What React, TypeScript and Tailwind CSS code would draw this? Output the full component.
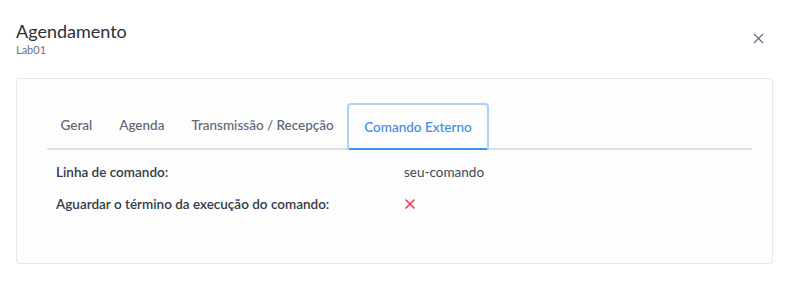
import { X } from 'lucide-react';

const tabs = ['Geral', 'Agenda', 'Transmissão / Recepção', 'Comando Externo'];

export default function App() {
  const active = 'Comando Externo';

  return (
    <div className="w-[789px] h-[292px] bg-white font-['Lato',sans-serif] text-[#2f3640]">
      <div className="flex items-start justify-between pl-4 pr-[22px] pt-[19px]">
        <div>
          <h1 className="text-[18px] leading-[24px] text-[#2b2f36]">Agendamento</h1>
          <p className="text-[11px] leading-[14px] text-[#6b7280]">Lab01</p>
        </div>
        <button className="mt-[11px] text-[#5f6b7a]">
          <X className="w-[17px] h-[17px]" strokeWidth={1.5} />
        </button>
      </div>

      <div className="mx-4 mt-[21px] h-[186px] rounded-[3px] border border-[#e7e8ea] bg-[#fdfdfd] pl-[30px] pr-[20px] pt-[24px]">
        <div className="flex border-b-2 border-[#dde1e6]">
          {tabs.map((t) =>
            t === active ? (
              <div
                key={t}
                className="-mb-[2px] flex h-[47px] items-center rounded-t-[4px] border-2 border-b-0 border-[#a9d3fa] px-[15px] text-[13.5px] font-medium text-[#3b8ee3] shadow-[inset_0_-2px_0_#3b95e8]"
              >
                {t}
              </div>
            ) : (
              <div
                key={t}
                className="flex h-[45px] items-center px-[13.5px] text-[13.5px] font-medium text-[#5b6573]"
              >
                {t}
              </div>
            )
          )}
        </div>

        <div className="pl-[9px] pt-[10px] text-[13.5px]">
          <div className="flex h-[24px] items-center">
            <span className="w-[348px] shrink-0 font-semibold text-[#333b47]">Linha de comando:</span>
            <span className="text-[#404955]">seu-comando</span>
          </div>
          <div className="mt-[8px] flex h-[24px] items-center">
            <span className="w-[348px] shrink-0 font-semibold text-[#333b47]">
              Aguardar o término da execução do comando:
            </span>
            <X className="w-[16px] h-[16px] -ml-[2px] text-[#f0384d]" strokeWidth={2.4} />
          </div>
        </div>
      </div>
    </div>
  );
}
